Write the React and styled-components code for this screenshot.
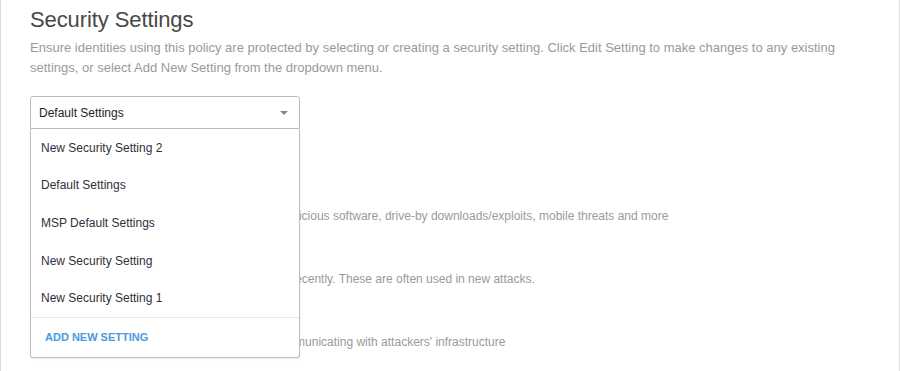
import React from "react";
import styled, { createGlobalStyle } from "styled-components";

const GlobalStyle = createGlobalStyle`
  html, body {
    margin: 0;
    padding: 0;
    background: #fff;
  }
  body {
    font-family: "Liberation Sans", Arial, sans-serif;
  }
`

const Panel = styled.div`
  box-sizing: border-box;
  width: 900px;
  min-height: 371px;
  padding: 7px 29px 0 29px;
  border-left: 1px solid #dcdcdc;
  border-right: 1px solid #dcdcdc;
  overflow: hidden;
`

const Title = styled.h2`
  margin: 0;
  font-size: 22px;
  line-height: 26px;
  font-weight: 400;
  color: #484848;
  letter-spacing: -0.1px;
`

const Description = styled.p`
  margin: 5px 0 0 0;
  max-width: 840px;
  font-size: 13px;
  line-height: 20px;
  color: #9a9a9a;
`

const SelectWrap = styled.div`
  position: relative;
  width: 270px;
  margin-top: 18px;
`

const SelectBox = styled.div`
  box-sizing: border-box;
  height: 33px;
  display: flex;
  align-items: center;
  justify-content: space-between;
  padding: 0 9px 0 8px;
  border: 1px solid #bdbdbd;
  border-radius: 3px 3px 0 0;
  background: #fff;
  font-size: 12px;
  color: #1e1e1e;
`

const Caret = styled.span`
  width: 0;
  height: 0;
  border-left: 4px solid transparent;
  border-right: 4px solid transparent;
  border-top: 4px solid #8a8a8a;
  margin-right: 2px;
`

const Menu = styled.div`
  position: absolute;
  top: 100%;
  left: 0;
  right: 0;
  z-index: 10;
  box-sizing: border-box;
  background: #fff;
  border: 1px solid #bdbdbd;
  border-top: none;
  border-radius: 0 0 3px 3px;
  box-shadow: 0 1px 2px rgba(0, 0, 0, 0.08);
`

const MenuItem = styled.div`
  height: 37.6px;
  display: flex;
  align-items: center;
  padding-left: 10px;
  font-size: 12px;
  color: #2f2f3a;
`

const MenuFooter = styled.div`
  box-sizing: border-box;
  height: 40px;
  display: flex;
  align-items: center;
  padding-left: 14px;
  border-top: 1px solid #e6e6e6;
  font-size: 11px;
  font-weight: 700;
  color: #4a9ade;
`

const Categories = styled.div`
  margin-top: 60px;
  display: flex;
  flex-direction: column;
  gap: 27px;
`

const Category = styled.div`
  padding-left: 51px;
  display: flex;
  flex-direction: column;
`

const CategoryName = styled.div`
  font-size: 13px;
  line-height: 18px;
  color: #444;
`

const CategoryText = styled.div`
  font-size: 12px;
  line-height: 18px;
  color: #9a9a9a;
`

const settings = [
  "New Security Setting 2",
  "Default Settings",
  "MSP Default Settings",
  "New Security Setting",
  "New Security Setting 1",
]

const categories = [
  {
    name: "Malware",
    text: "Websites and other servers that host malicious software, drive-by downloads/exploits, mobile threats and more",
  },
  {
    name: "Newly Seen Domains",
    text: "Domains that have become active very recently. These are often used in new attacks.",
  },
  {
    name: "Command and Control Callbacks",
    text: "Prevent compromised devices from communicating with attackers' infrastructure",
  },
]

function App() {
  return (
    <>
      <GlobalStyle />
      <Panel>
        <Title>Security Settings</Title>
        <Description>
          Ensure identities using this policy are protected by selecting or creating a security setting. Click Edit
          Setting to make changes to any existing settings, or select Add New Setting from the dropdown menu.
        </Description>
        <SelectWrap>
          <SelectBox>
            Default Settings
            <Caret />
          </SelectBox>
          <Menu>
            {settings.map((s) => (
              <MenuItem key={s}>{s}</MenuItem>
            ))}
            <MenuFooter>ADD NEW SETTING</MenuFooter>
          </Menu>
        </SelectWrap>
        <Categories>
          {categories.map((c) => (
            <Category key={c.name}>
              <CategoryName>{c.name}</CategoryName>
              <CategoryText>{c.text}</CategoryText>
            </Category>
          ))}
        </Categories>
      </Panel>
    </>
  )
}

export default App;
